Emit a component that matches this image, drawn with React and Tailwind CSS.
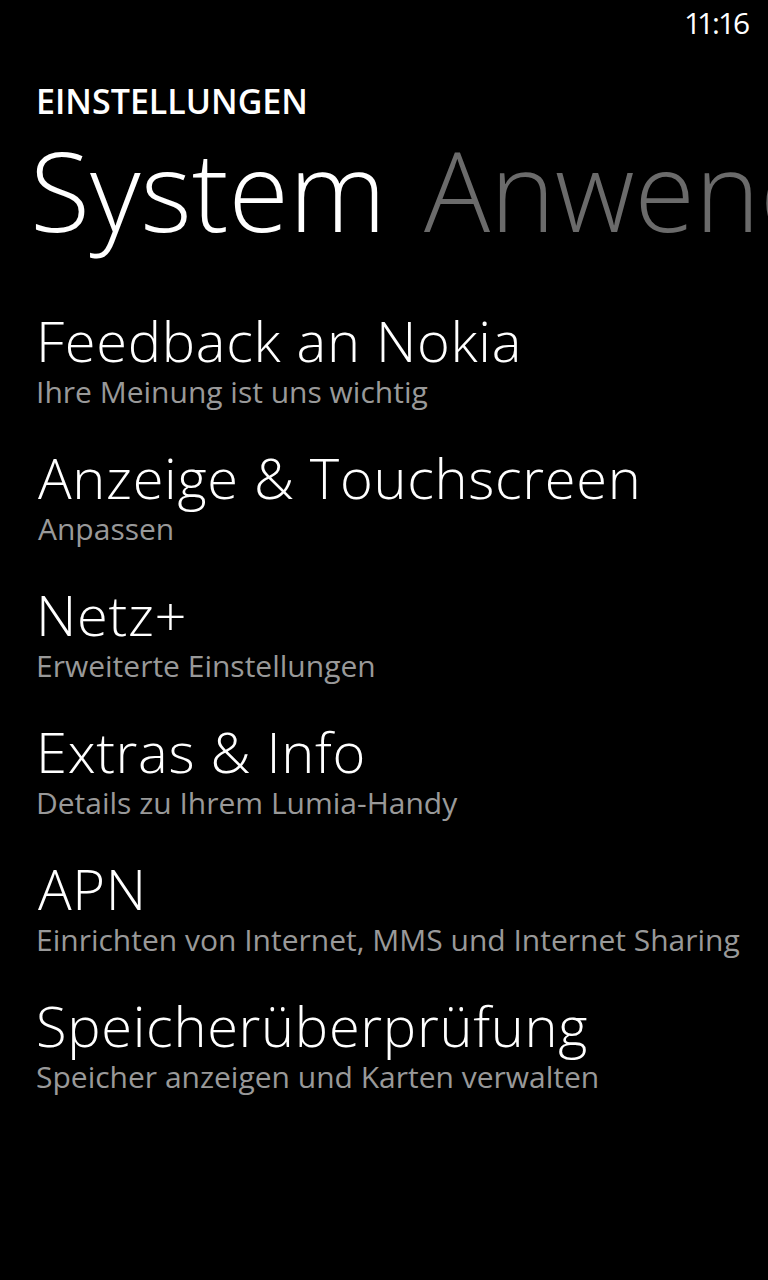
export default function App() {
  const items = [
    { t: "Feedback an Nokia", s: "Ihre Meinung ist uns wichtig", tx: "", sx: "" },
    { t: "Anzeige & Touchscreen", s: "Anpassen", tx: "pl-[2px]", sx: "pl-[2px]" },
    { t: "Netz+", s: "Erweiterte Einstellungen", tx: "", sx: "" },
    { t: "Extras & Info", s: "Details zu Ihrem Lumia-Handy", tx: "", sx: "" },
    { t: "APN", s: "Einrichten von Internet, MMS und Internet Sharing", tx: "pl-[2px]", sx: "" },
    { t: "Speicherüberprüfung", s: "Speicher anzeigen und Karten verwalten", tx: "", sx: "" },
  ];
  return (
    <div
      className="w-[768px] h-[1280px] bg-black text-white overflow-hidden flex flex-col"
      style={{ fontFamily: '"Open Sans", "Noto Sans", sans-serif' }}
    >
      <div className="flex justify-end pr-[18px] pt-[8px]">
        <span className="text-[30px] leading-[30px] font-normal proportional-nums">11:16</span>
      </div>
      <div className="pl-[36px] mt-[46px] text-[34px] leading-[34px] font-semibold">EINSTELLUNGEN</div>
      <div className="flex whitespace-nowrap mt-[16px] pl-[30px] text-[110px] leading-[110px] font-light">
        <span className="text-white">System</span>
        <span className="ml-[38px] text-[#6b6b6b]">Anwendungen</span>
      </div>
      <div className="flex flex-col gap-[33px] mt-[63px] pl-[36px]">
        {items.map((it) => (
          <div key={it.t} className="flex flex-col">
            <div className={`text-[56px] leading-[66px] font-light tracking-[0.7px] whitespace-nowrap ${it.tx}`}>{it.t}</div>
            <div className={`text-[30px] leading-[38px] font-normal text-[#999999] whitespace-nowrap ${it.sx}`}>{it.s}</div>
          </div>
        ))}
      </div>
    </div>
  );
}
